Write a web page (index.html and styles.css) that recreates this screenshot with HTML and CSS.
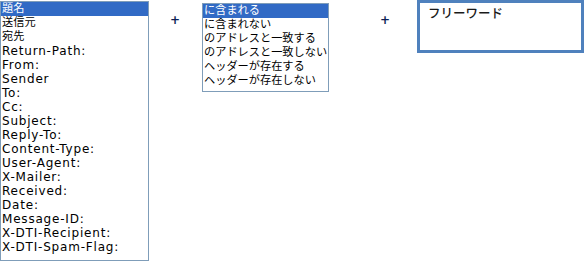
FILE: index.html
```html
<!DOCTYPE html>
<html lang="ja">
<head>
    <meta charset="UTF-8">
    <title>検索条件</title>
    <link rel="stylesheet" href="styles.css">
</head>
<body>
    <div class="search-row">
        <div class="list list-field">
            <div class="item jp selected">題名</div>
            <div class="item jp">送信元</div>
            <div class="item jp">宛先</div>
            <div class="item">Return-Path:</div>
            <div class="item">From:</div>
            <div class="item">Sender</div>
            <div class="item">To:</div>
            <div class="item">Cc:</div>
            <div class="item">Subject:</div>
            <div class="item">Reply-To:</div>
            <div class="item">Content-Type:</div>
            <div class="item">User-Agent:</div>
            <div class="item">X-Mailer:</div>
            <div class="item">Received:</div>
            <div class="item">Date:</div>
            <div class="item">Message-ID:</div>
            <div class="item">X-DTI-Recipient:</div>
            <div class="item">X-DTI-Spam-Flag:</div>
        </div>
        <div class="plus plus-first">+</div>
        <div class="list list-cond">
            <div class="item jp selected">に含まれる</div>
            <div class="item jp">に含まれない</div>
            <div class="item jp">のアドレスと一致する</div>
            <div class="item jp">のアドレスと一致しない</div>
            <div class="item jp">ヘッダーが存在する</div>
            <div class="item jp">ヘッダーが存在しない</div>
        </div>
        <div class="plus plus-second">+</div>
        <div class="freeword">フリーワード</div>
    </div>
</body>
</html>
```

FILE: styles.css
```css
body {
    margin: 0;
    background: #fff;
    overflow: hidden;
}

.search-row {
    display: flex;
    align-items: flex-start;
}

.list {
    box-sizing: border-box;
    border: 1px solid #7f9db9;
    background: #fff;
    font-family: "DejaVu Sans", "Noto Sans CJK JP", sans-serif;
    font-size: 12px;
    color: #000;
    flex-shrink: 0;
    overflow: hidden;
}

.list-field {
    width: 149px;
    height: 260px;
    margin-top: 1px;
}

.list-cond {
    width: 127px;
    height: 89px;
    margin-top: 3px;
}

.item {
    height: 14px;
    line-height: 14px;
    padding-left: 1px;
    white-space: nowrap;
    letter-spacing: 0.8px;
}

.item.jp {
    font-size: 11.2px;
    letter-spacing: 0;
}

.item.selected {
    background: #316ac5;
    color: #fff;
}

.plus {
    font-family: "DejaVu Sans", sans-serif;
    font-weight: bold;
    font-size: 12px;
    line-height: 12px;
    color: #0d1f55;
    margin-top: 14px;
    flex-shrink: 0;
}

.plus-first {
    margin-left: 21px;
    width: 32px;
}

.plus-second {
    margin-left: 51px;
    width: 37px;
}

.freeword {
    box-sizing: border-box;
    width: 167px;
    height: 53px;
    border: 3px solid #4f81bd;
    padding: 2px 8px;
    font-family: "Noto Sans CJK JP", sans-serif;
    font-size: 12.5px;
    font-weight: 500;
    line-height: 15px;
    color: #1a1a1a;
    flex-shrink: 0;
}
```
